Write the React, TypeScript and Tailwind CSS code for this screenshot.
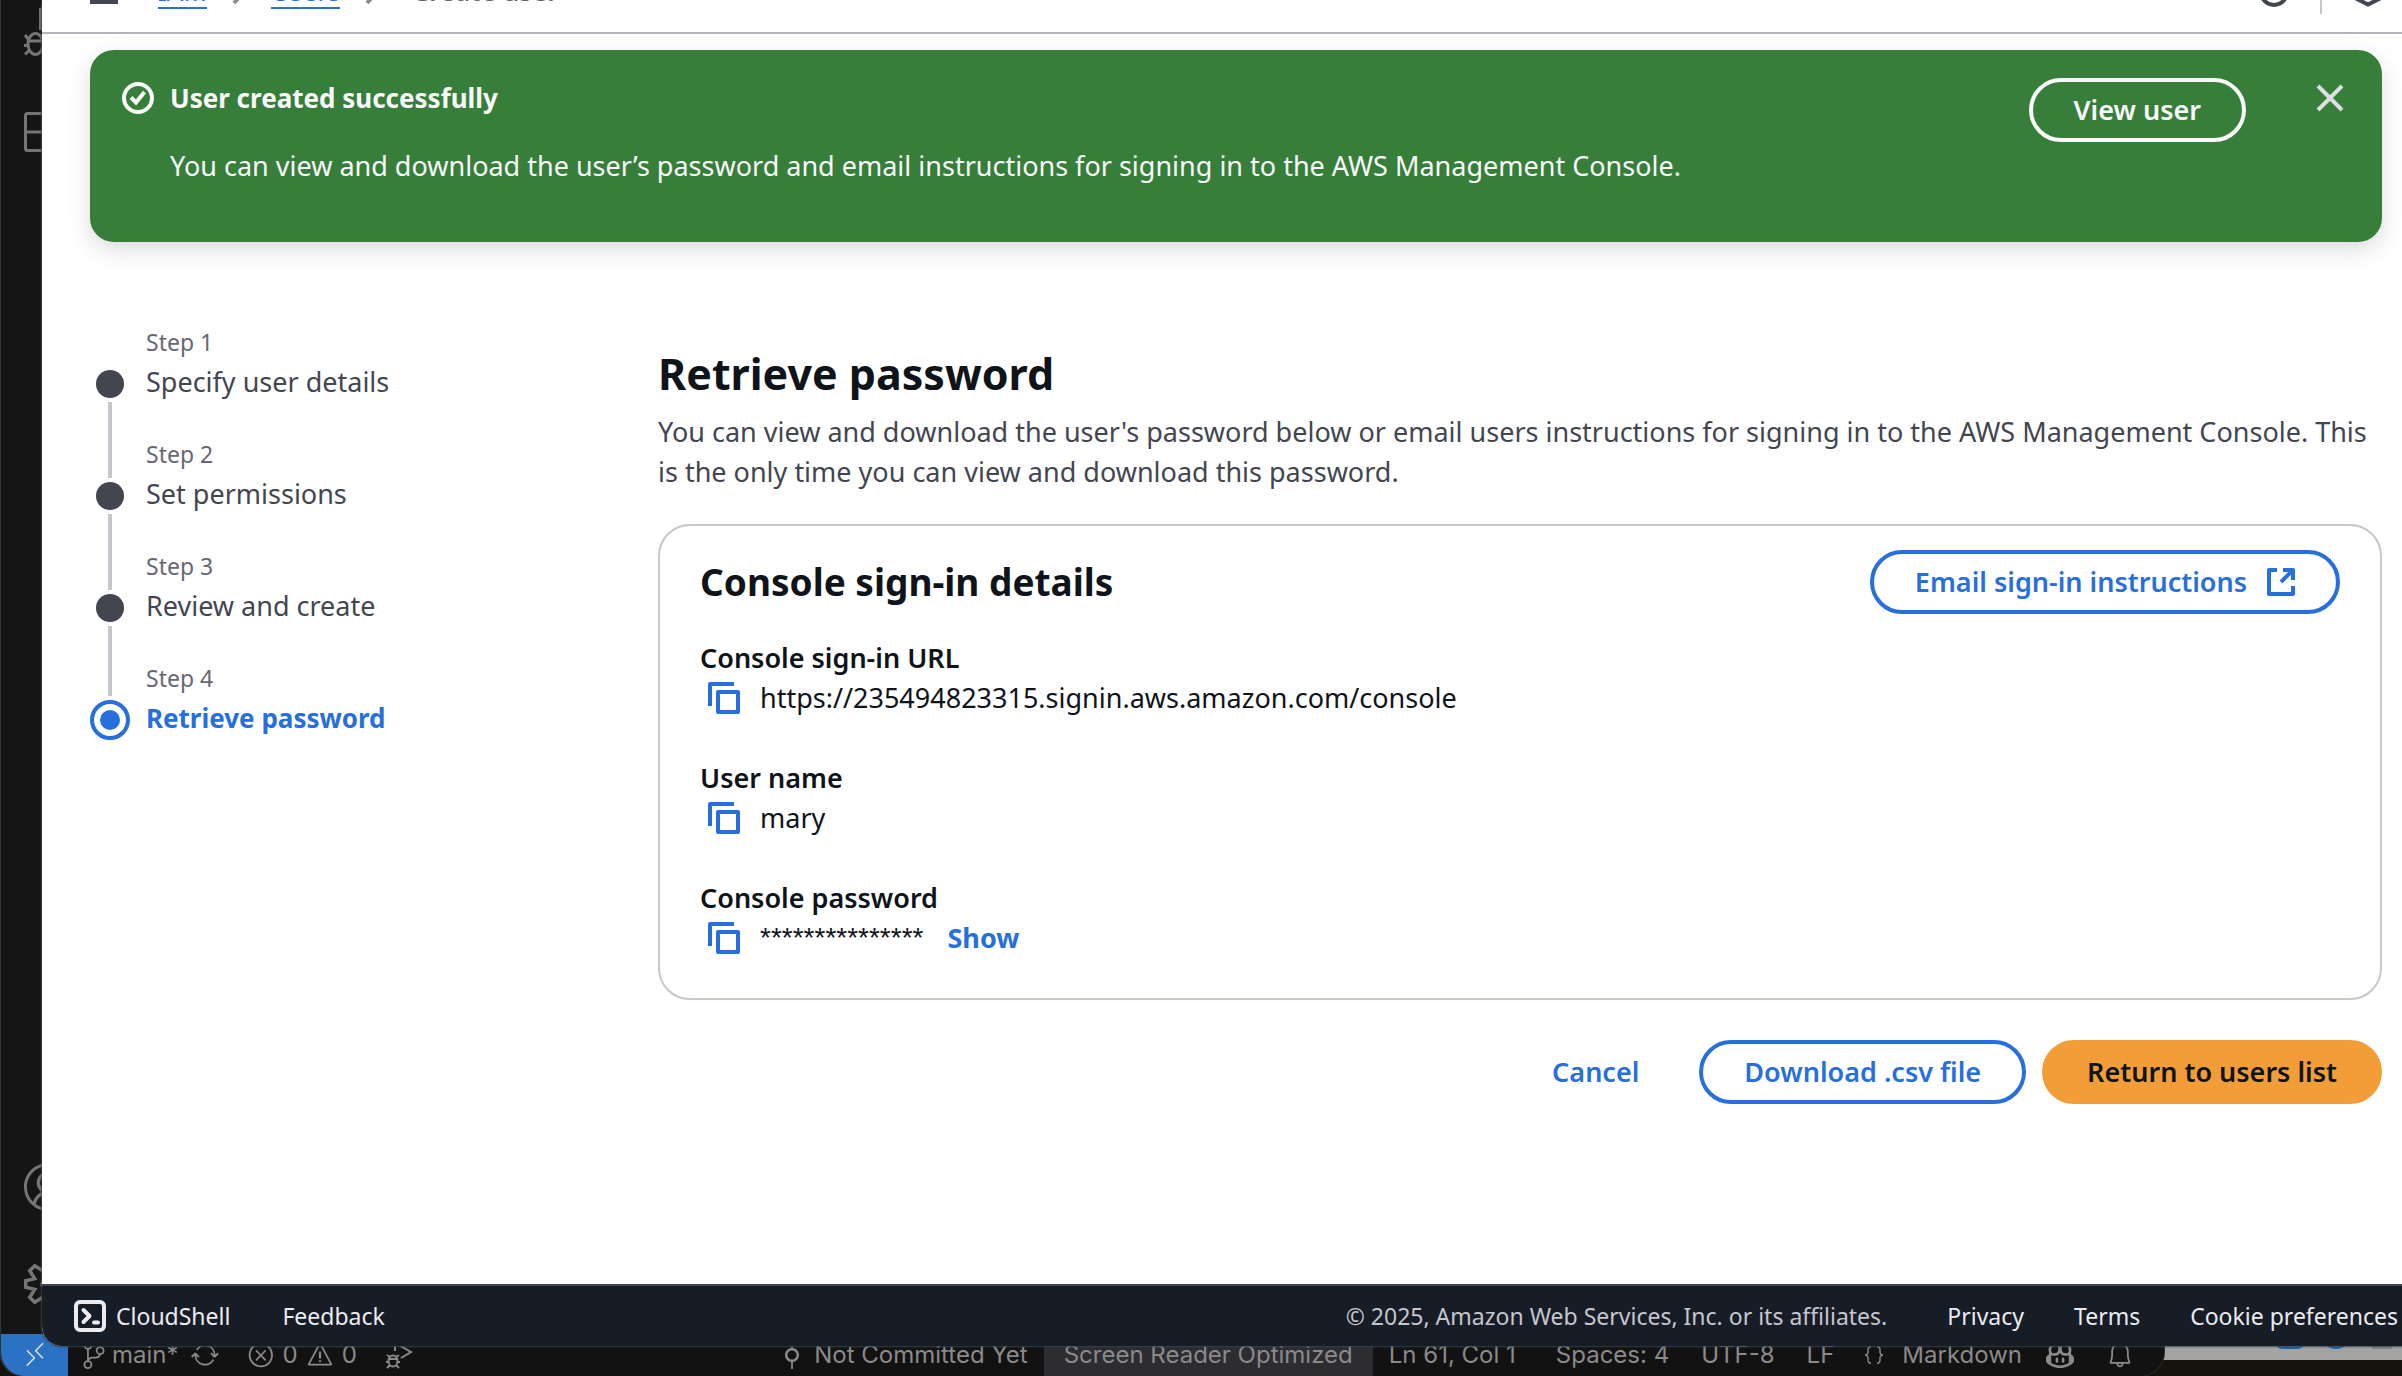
import type { ReactNode } from "react";
import {
  VscRemote,
  VscGitCommit,
  VscSourceControl,
  VscSync,
  VscError,
  VscWarning,
  VscBell,
  VscCopilot,
  VscJson,
  VscAccount,
} from "react-icons/vsc";

/* ---------- icons ---------- */

function CheckCircle() {
  return (
    <svg viewBox="0 0 32 32" className="size-8 shrink-0" fill="none" stroke="currentColor" strokeWidth="4" aria-hidden="true">
      <circle cx="16" cy="16" r="14" />
      <path d="M9 15.500l5 5L22.500 10" />
    </svg>
  );
}

function CloseIcon() {
  return (
    <svg viewBox="0 0 32 32" className="size-8" fill="none" stroke="currentColor" strokeWidth="4" aria-hidden="true">
      <path d="M4 4l24 24M28 4L4 28" />
    </svg>
  );
}

function CopyIcon() {
  return (
    <svg viewBox="0 0 32 32" className="size-8" fill="none" stroke="currentColor" strokeWidth="4" strokeLinejoin="round" aria-hidden="true">
      <path d="M26 2H2v22" />
      <path d="M10 10h20v20H10z" />
    </svg>
  );
}

function ExternalIcon() {
  return (
    <svg viewBox="2 2 28 28" className="size-7" fill="none" stroke="currentColor" strokeWidth="4" strokeLinejoin="round" aria-hidden="true">
      <path d="M12 4H4v24h24v-8" />
      <path d="M18 4h10v10M28 4L16 16" />
    </svg>
  );
}

function CloudShellIcon() {
  return (
    <svg viewBox="0 0 32 32" className="size-8" fill="none" stroke="currentColor" strokeWidth="4" strokeLinejoin="round" strokeLinecap="round" aria-hidden="true">
      <rect x="2" y="2" width="28" height="28" rx="4" />
      <path d="M9.500 10l6 6-6 6M20 22.500h4" />
    </svg>
  );
}

function Chevron() {
  return (
    <svg viewBox="0 0 16 28" className="h-7 w-4 text-[#8c8c94]" fill="none" stroke="currentColor" strokeWidth="4" aria-hidden="true">
      <path d="M3 3l10 11L3 25" />
    </svg>
  );
}

function DebugPlay() {
  return (
    <svg viewBox="0 0 28 28" className="size-7" fill="none" stroke="currentColor" strokeWidth="2" aria-hidden="true">
      <path d="M10 10V2l16 9-10 6" />
      <ellipse cx="8" cy="20" rx="4.500" ry="5.500" />
      <path d="M4 18h8M1 21h3M12 21h3M2 14l3 2M14 14l-3 2M2 27l3-3M14 27l-3-3" />
    </svg>
  );
}

function RunAndDebug() {
  return (
    <svg viewBox="0 0 48 56" className="h-14 w-12" fill="none" stroke="currentColor" strokeWidth="3" strokeLinejoin="round" aria-hidden="true">
      <path d="M16.500 30V9L46 24 28 36" />
      <ellipse cx="11.500" cy="44" rx="7.500" ry="10.500" />
      <path d="M4 41h15M1 35l4 5M0 45.500h4M1 54.500l4.500-4.500M22 35l-4 5M23 45.500h-4M22 54.500l-4.500-4.500" />
    </svg>
  );
}

function ExtensionsIcon() {
  return (
    <svg viewBox="0 0 40 40" className="size-10" fill="none" stroke="currentColor" strokeWidth="3" aria-hidden="true">
      <rect x="1.500" y="1.500" width="37" height="37" rx="2" />
      <path d="M2 20h36M20.500 2v36" />
    </svg>
  );
}

function GearIcon() {
  return (
    <svg viewBox="0 0 40 40" className="size-10" fill="none" stroke="currentColor" strokeWidth="3.500" aria-hidden="true">
      <path d="M1.700 16.700v6.600l9 2-5 8 5 5 8-5 1.300 5h5l1-5 8 5 4-5-5-8 5.300-2v-6.600l-5.300-2 5-8-4-5-8 5-1-5h-5l-1.300 5-8-5-5 5 5 8z" />
      <circle cx="22" cy="20" r="4" />
    </svg>
  );
}

/* ---------- browser window ---------- */

function PillButton({ children, tone = "normal" }: { children: ReactNode; tone?: "normal" | "primary" | "flash" }) {
  const tones = {
    normal: "border-[#276fdc] text-[#276fdc]",
    primary: "border-[#f39d39] bg-[#f39d39] text-[#0f141a]",
    flash: "border-[#f9f9fa] text-[#f9f9fa]",
  };
  return (
    <button
      type="button"
      className={`flex items-center gap-5 rounded-full border-4 px-[41px] py-2 text-[27px] leading-10 font-semibold whitespace-nowrap ${tones[tone]}`}
    >
      {children}
    </button>
  );
}

function Header() {
  return (
    <header className="-mt-12 flex h-[82px] shrink-0 items-center border-b-2 border-[#b4b4bb] bg-white pr-[18px] pl-12 text-[26px] text-[#424650]">
      <button type="button" aria-label="Open navigation" className="flex h-6 w-7 flex-col justify-between pt-1">
        <span className="h-1 w-full bg-[#424650]" />
        <span className="h-1 w-full bg-[#424650]" />
        <span className="h-1 w-full bg-[#424650]" />
      </button>
      <nav aria-label="Breadcrumbs" className="ml-10 flex items-center gap-6 leading-8">
        <a href="#iam" className="border-b-2 border-[#276fdc] text-[#276fdc]">IAM</a>
        <Chevron />
        <a href="#users" className="border-b-2 border-[#276fdc] text-[#276fdc]">Users</a>
        <Chevron />
        <span className="ml-2 pb-0.5 font-semibold text-[#656871]">Create user</span>
      </nav>
      <div className="ml-auto flex items-center gap-[30px]">
        <button type="button" aria-label="Info">
          <svg viewBox="0 0 32 32" className="size-8" fill="none" stroke="currentColor" strokeWidth="4" aria-hidden="true">
            <circle cx="16" cy="16" r="13" />
            <path d="M16 14v8M16 9v3" />
          </svg>
        </button>
        <span className="h-11 w-0.5 bg-[#c6c6cd]" />
        <button type="button" aria-label="Settings">
          <svg viewBox="0 0 32 32" className="size-8" fill="none" stroke="currentColor" strokeWidth="4" aria-hidden="true">
            <path d="M16 2.500l12 7v13l-12 6-12-6v-13z" />
            <circle cx="16" cy="16" r="4" />
          </svg>
        </button>
      </div>
    </header>
  );
}

function Flash() {
  return (
    <section className="flex min-h-48 items-start rounded-3xl bg-[#377e3a] px-8 py-7 text-[#f9f9fa] shadow-[0_8px_24px_rgba(0,7,22,0.14)]">
      <div className="flex flex-1 gap-4">
        <div className="pt-1">
          <CheckCircle />
        </div>
        <div>
          <h2 className="text-[26px] leading-10 font-bold">User created successfully</h2>
          <p className="mt-7 text-[27px] leading-10">
            You can view and download the user’s password and email instructions for signing in to the AWS Management Console.
          </p>
        </div>
      </div>
      <PillButton tone="flash">View user</PillButton>
      <button type="button" aria-label="Dismiss" className="mt-1 mr-1 ml-[68px] text-[#dedee3]">
        <CloseIcon />
      </button>
    </section>
  );
}

const steps = ["Specify user details", "Set permissions", "Review and create", "Retrieve password"];

function Steps() {
  return (
    <nav aria-label="Steps" className="w-[568px] shrink-0">
      <ol>
        {steps.map((title, i) => {
          const current = i === steps.length - 1;
          return (
            <li key={title} className="grid h-28 grid-cols-[40px_1fr] grid-rows-[42px_40px_30px] gap-x-4">
              <div className="flex items-start justify-center">
                {i > 0 && <span className={current ? "h-[38px] w-1 bg-[#c6c6cd]" : "h-11 w-1 bg-[#c6c6cd]"} />}
              </div>
              <span className="text-[23px] leading-10 text-[#656871]">Step {i + 1}</span>
              {current ? (
                <span className="flex size-10 items-center justify-center rounded-full border-4 border-[#276fdc]">
                  <span className="size-5 rounded-full bg-[#276fdc]" />
                </span>
              ) : (
                <span className="flex items-center justify-center">
                  <span className="size-7 rounded-full bg-[#424650]" />
                </span>
              )}
              {current ? (
                <span className="text-[26px] leading-9 font-bold text-[#276fdc]" aria-current="step">
                  {title}
                </span>
              ) : (
                <a href="#step" className="text-[27px] leading-9 text-[#424650]">
                  {title}
                </a>
              )}
              <div className="-mt-0.5 flex justify-center">{!current && <span className="w-1 bg-[#c6c6cd]" />}</div>
            </li>
          );
        })}
      </ol>
    </nav>
  );
}

function Field({ label, children }: { label: string; children: ReactNode }) {
  return (
    <div>
      <dt className="text-[27px] leading-10 font-semibold">{label}</dt>
      <dd className="flex items-center pl-2 text-[27px] leading-10">
        <button type="button" aria-label={`Copy ${label}`} className="mr-5 text-[#276fdc]">
          <CopyIcon />
        </button>
        {children}
      </dd>
    </div>
  );
}

function Details() {
  return (
    <section className="rounded-[32px] border-2 border-[#c6c6cd] px-10 pt-6 pb-10">
      <div className="flex items-center justify-between">
        <h2 className="text-[37px] leading-12 font-bold">Console sign-in details</h2>
        <PillButton>
          Email sign-in instructions
          <ExternalIcon />
        </PillButton>
      </div>
      <dl className="mt-6 flex flex-col gap-10">
        <Field label="Console sign-in URL">https://235494823315.signin.aws.amazon.com/console</Field>
        <Field label="User name">mary</Field>
        <Field label="Console password">
          <span className="font-['Liberation_Sans',sans-serif] text-[28px]">***************</span>
          <button type="button" className="ml-6 font-bold text-[#276fdc]">
            Show
          </button>
        </Field>
      </dl>
    </section>
  );
}

function Footer() {
  return (
    <footer className="flex h-[62px] shrink-0 items-center border-t-2 border-[#424650] bg-[#161d26] pl-8 text-[23px] leading-8 whitespace-nowrap text-[#ebebf0]">
      <button type="button" className="flex items-center gap-2.5">
        <CloudShellIcon />
        CloudShell
      </button>
      <a href="#feedback" className="ml-[52px]">Feedback</a>
      <span className="mr-[60px] ml-auto text-[#c6c6cd]">© 2025, Amazon Web Services, Inc. or its affiliates.</span>
      <div className="flex gap-[50px] pr-1">
        <a href="#privacy">Privacy</a>
        <a href="#terms">Terms</a>
        <a href="#cookies">Cookie preferences</a>
      </div>
    </footer>
  );
}

function BrowserWindow() {
  return (
    <div className="absolute inset-x-0 top-0 bottom-[30px] left-[42px] flex flex-col overflow-hidden rounded-bl-[20px] bg-white text-[#0f141a] shadow-[0_0_2px_1px_rgba(60,66,74,0.9)]">
      <Header />
      <main className="flex-1 overflow-hidden px-12 pt-4 pr-5">
        <Flash />
        <div className="mt-20 flex">
          <Steps />
          <div className="min-w-0 flex-1 pt-5">
            <h1 className="mb-1.5 text-[43px] leading-16 font-bold">Retrieve password</h1>
            <p className="mb-8 text-[27px] leading-10 text-[#424650]">
              You can view and download the user's password below or email users instructions for signing in to the AWS Management Console. This is the only time you can view and download this password.
            </p>
            <Details />
            <div className="mt-10 flex justify-end gap-4">
              <button type="button" className="px-11 text-[27px] font-semibold text-[#276fdc]">
                Cancel
              </button>
              <PillButton>Download .csv file</PillButton>
              <PillButton tone="primary">Return to users list</PillButton>
            </div>
          </div>
        </div>
      </main>
      <Footer />
    </div>
  );
}

/* ---------- editor window and desktop behind ---------- */

function EditorWindow() {
  return (
    <div className="absolute top-0 bottom-0 left-0 flex w-[2164px] flex-col overflow-hidden rounded-b-3xl border-l border-[#333333] bg-[#151515] text-[#757575] shadow-[0_0_0_1px_#2c2c2c]">
      <div className="flex w-[80px] flex-1 flex-col pl-[23px]">
        <RunAndDebug />
        <div className="mt-14">
          <ExtensionsIcon />
        </div>
        <VscAccount className="mt-auto size-12" />
        <div className="mt-[53px] mb-[30px]">
          <GearIcon />
        </div>
      </div>
      <footer className="flex h-[42px] items-center bg-[#121212] pr-[30px] font-['Inter',sans-serif] text-[24px] leading-10 whitespace-nowrap text-[#8a8a8a]">
        <span className="flex h-full w-[67px] items-center justify-center bg-[#2b72c4] text-[#dddddd]">
          <VscRemote className="size-7" />
        </span>
        <VscSourceControl className="ml-3 size-7" />
        <span className="ml-1">main*</span>
        <VscSync className="ml-3 size-7" />
        <VscError className="ml-7 size-7" />
        <span className="ml-2">0</span>
        <VscWarning className="ml-2 size-7" />
        <span className="ml-2">0</span>
        <span className="ml-7">
          <DebugPlay />
        </span>
        <div className="ml-auto flex h-full items-center">
          <VscGitCommit className="size-7" />
          <span className="ml-2">Not Committed Yet</span>
          <span className="mx-4 flex h-full items-center bg-[#2c2c31] px-5">Screen Reader Optimized</span>
          <span>Ln 61, Col 1</span>
          <span className="ml-10">Spaces: 4</span>
          <span className="ml-8">UTF-8</span>
          <span className="ml-8">LF</span>
          <VscJson className="ml-7 size-6" />
          <span className="ml-4">Markdown</span>
          <VscCopilot className="ml-6 size-7" />
          <VscBell className="ml-8 size-7" />
        </div>
      </footer>
    </div>
  );
}

function Dock() {
  return (
    <div className="absolute right-0 bottom-4 flex h-8 w-[260px] items-start justify-end gap-5 bg-[#a3a3a3] pr-2.5">
      <span className="h-[21px] w-7 rounded-md border-2 border-[#1a63b0] bg-[#3a86a8]" />
      <span className="h-[21px] w-6 rounded-full border-2 border-[#1a63b0] bg-[#3a86a8]" />
      <span className="ml-1 h-[21px] w-5 bg-[#858585]" />
    </div>
  );
}

export default function App() {
  return (
    <div className="relative h-screen overflow-hidden bg-[#14140c] font-['Noto_Sans',sans-serif]">
      <Dock />
      <EditorWindow />
      <BrowserWindow />
    </div>
  );
}
